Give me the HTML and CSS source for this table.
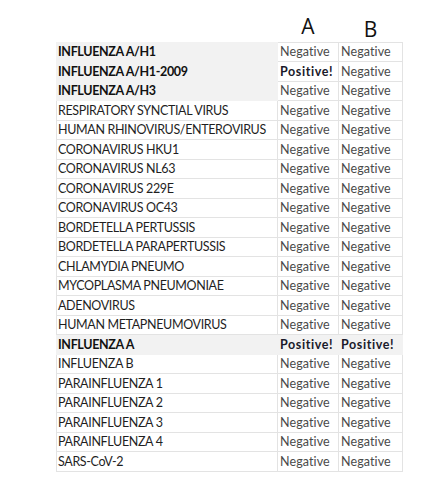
FILE: index.html
```html
<!DOCTYPE html>
<html>
<head>
<meta charset="utf-8">
<link rel="stylesheet" href="styles.css">
</head>
<body>
<table class="results">
  <colgroup><col class="c-name"><col class="c-val"><col class="c-val2"></colgroup>
  <thead>
    <tr class="head"><th></th><th class="h-a">A</th><th class="h-b">B</th></tr>
  </thead>
  <tbody>
    <tr class="flag"><td class="name">INFLUENZA A/H1</td><td class="val">Negative</td><td class="val">Negative</td></tr>
    <tr class="flag"><td class="name">INFLUENZA A/H1-2009</td><td class="val pos">Positive!</td><td class="val">Negative</td></tr>
    <tr class="flag"><td class="name">INFLUENZA A/H3</td><td class="val">Negative</td><td class="val">Negative</td></tr>
    <tr><td class="name">RESPIRATORY SYNCTIAL VIRUS</td><td class="val">Negative</td><td class="val">Negative</td></tr>
    <tr><td class="name">HUMAN RHINOVIRUS/ENTEROVIRUS</td><td class="val">Negative</td><td class="val">Negative</td></tr>
    <tr><td class="name">CORONAVIRUS HKU1</td><td class="val">Negative</td><td class="val">Negative</td></tr>
    <tr><td class="name">CORONAVIRUS NL63</td><td class="val">Negative</td><td class="val">Negative</td></tr>
    <tr><td class="name">CORONAVIRUS 229E</td><td class="val">Negative</td><td class="val">Negative</td></tr>
    <tr><td class="name">CORONAVIRUS OC43</td><td class="val">Negative</td><td class="val">Negative</td></tr>
    <tr><td class="name">BORDETELLA PERTUSSIS</td><td class="val">Negative</td><td class="val">Negative</td></tr>
    <tr><td class="name">BORDETELLA PARAPERTUSSIS</td><td class="val">Negative</td><td class="val">Negative</td></tr>
    <tr><td class="name">CHLAMYDIA PNEUMO</td><td class="val">Negative</td><td class="val">Negative</td></tr>
    <tr><td class="name">MYCOPLASMA PNEUMONIAE</td><td class="val">Negative</td><td class="val">Negative</td></tr>
    <tr><td class="name">ADENOVIRUS</td><td class="val">Negative</td><td class="val">Negative</td></tr>
    <tr><td class="name">HUMAN METAPNEUMOVIRUS</td><td class="val">Negative</td><td class="val">Negative</td></tr>
    <tr class="flag full"><td class="name">INFLUENZA A</td><td class="val pos">Positive!</td><td class="val pos">Positive!</td></tr>
    <tr><td class="name">INFLUENZA B</td><td class="val">Negative</td><td class="val">Negative</td></tr>
    <tr><td class="name">PARAINFLUENZA 1</td><td class="val">Negative</td><td class="val">Negative</td></tr>
    <tr><td class="name">PARAINFLUENZA 2</td><td class="val">Negative</td><td class="val">Negative</td></tr>
    <tr><td class="name">PARAINFLUENZA 3</td><td class="val">Negative</td><td class="val">Negative</td></tr>
    <tr><td class="name">PARAINFLUENZA 4</td><td class="val">Negative</td><td class="val">Negative</td></tr>
    <tr><td class="name">SARS-CoV-2</td><td class="val">Negative</td><td class="val">Negative</td></tr>
  </tbody>
</table>
</body>
</html>
```
FILE: styles.css
```css
html, body {
  margin: 0;
  padding: 0;
  background: #ffffff;
}
body {
  padding: 0 0 0 56px;
  font-family: "Lato", "Open Sans", sans-serif;
}
.results {
  border-collapse: collapse;
  table-layout: fixed;
  width: 346px;
}
.c-name { width: 221px; }
.c-val { width: 61px; }
.c-val2 { width: 64px; }

.head th {
  height: 42px;
  box-sizing: border-box;
  padding: 0;
  font-weight: 400;
  font-size: 21px;
  line-height: 24px;
  color: #111;
  text-align: center;
  vertical-align: bottom;
  font-family: "Open Sans", sans-serif;
}
.head .h-a { padding-bottom: 4px; }
.head .h-b { padding-bottom: 1px; }

tbody td {
  height: 19.5px;
  padding: 0 0 0 1px;
  box-sizing: border-box;
  border: 1px solid #e3e3e3;
  font-size: 12.5px;
  line-height: 17px;
  white-space: nowrap;
  overflow: hidden;
}
.name {
  color: #1f1f1f;
  letter-spacing: -0.35px;
}
.val {
  color: #4a4a4a;
  padding-left: 2px;
  letter-spacing: 0.1px;
}
.flag .name {
  background: #f2f2f2;
  font-weight: 700;
  color: #111;
  border-color: #f2f2f2;
}
.full td {
  background: #f2f2f2;
  border-color: #f2f2f2;
}
.pos {
  font-weight: 700;
  color: #1a1a2a;
  letter-spacing: 0.6px;
}
```
